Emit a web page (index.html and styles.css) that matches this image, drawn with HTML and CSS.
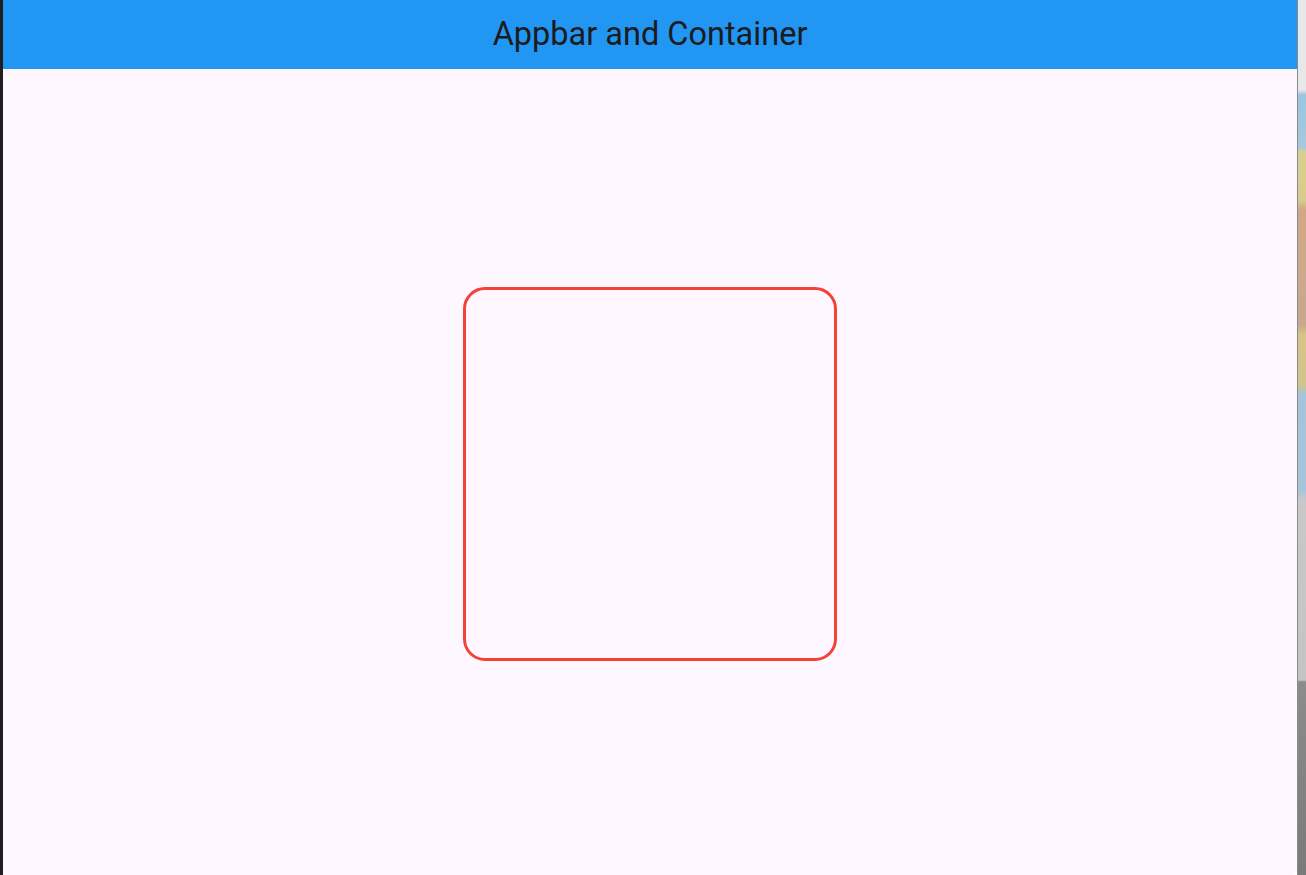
FILE: index.html
```html
<!DOCTYPE html>
<html>
<head>
<meta charset="utf-8">
<link rel="stylesheet" href="styles.css">
</head>
<body>
<div class="screen">
  <div class="edge-left"></div>
  <div class="app">
    <header class="appbar"><h1 class="title">Appbar and Container</h1></header>
    <main class="content">
      <div class="box"></div>
    </main>
  </div>
  <div class="edge-right"></div>
</div>
</body>
</html>
```
FILE: styles.css
```css
html, body {
  margin: 0;
  padding: 0;
  width: 1306px;
  height: 875px;
  overflow: hidden;
  font-family: Roboto, "Liberation Sans", sans-serif;
}
.screen {
  display: flex;
  width: 1306px;
  height: 875px;
}
.edge-left {
  width: 3px;
  background: #1f1f1f;
}
.app {
  width: 1295px;
  display: flex;
  flex-direction: column;
  background: #fef7ff;
  border-bottom-right-radius: 6px;
  overflow: hidden;
}
.appbar {
  height: 69px;
  background: #2196f3;
  display: flex;
  align-items: center;
  justify-content: center;
  flex-shrink: 0;
}
.title {
  margin: 0;
  font-weight: 400;
  font-size: 32.5px;
  color: #1d1b20;
  padding-bottom: 2px;
}
.content {
  flex: 1;
  display: flex;
  align-items: center;
  justify-content: center;
  padding-top: 3px;
}
.box {
  width: 374px;
  height: 374px;
  box-sizing: border-box;
  border: 3.5px solid #f44336;
  border-radius: 22px;
}
.edge-right {
  width: 8px;
  border-left: 1px solid #8a8a8a;
  background: linear-gradient(to bottom,
    #e8e8e8 0px, #e8e8e8 90px,
    #9cc4e0 95px, #a8c8dc 148px,
    #d8d090 152px, #d8cc8c 200px,
    #d0a888 210px, #c8a890 325px,
    #d8c488 335px, #d0c48c 385px,
    #a4c4dc 395px, #a8c4dc 490px,
    #c8c8c8 500px, #c4c4c4 680px,
    #8c8c8c 682px, #7a7a7a 875px);
}
```
